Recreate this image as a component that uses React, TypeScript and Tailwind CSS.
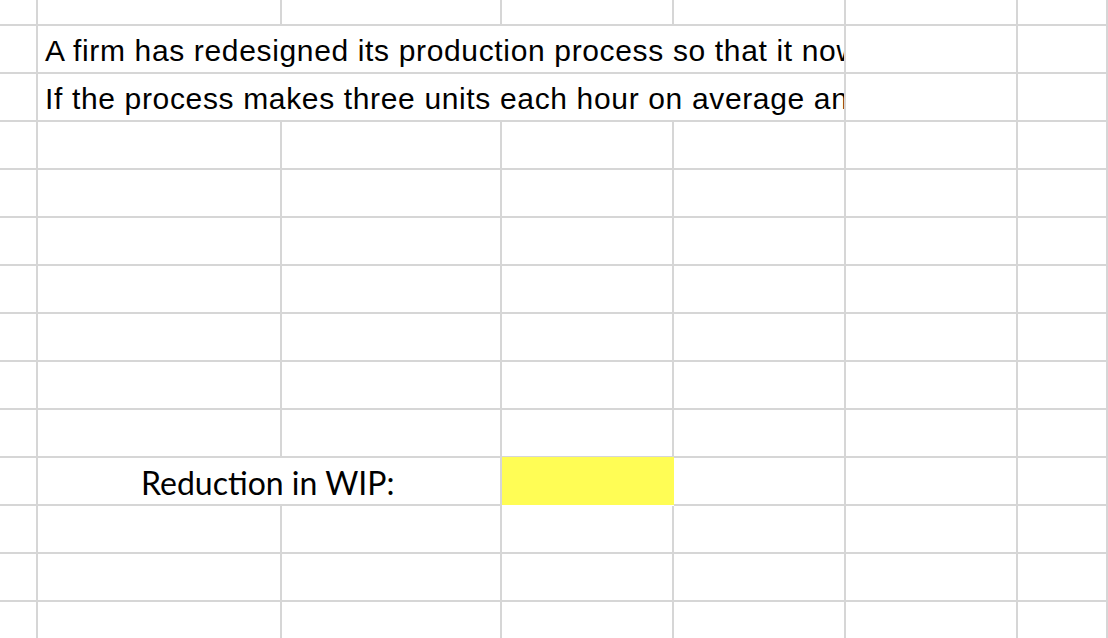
const cols = ["A", "B", "C", "D", "E", "F", "G"];

function Cell({ className = "", children }: { className?: string; children?: React.ReactNode }) {
  return (
    <div className={`border-r-2 border-b-2 border-[#d6d6d6] whitespace-nowrap ${className}`}>
      {children}
    </div>
  );
}

export default function App() {
  const emptyRows = [4, 5, 6, 7, 8, 9, 10];
  const trailingRows = [12, 13, 14];

  return (
    <div className="w-[1108px] h-[638px] overflow-hidden bg-white">
      <div className="grid grid-cols-[38px_244px_220px_172px_172px_172px_1fr] grid-rows-[26px_repeat(13,48px)]">
        {/* row 1 */}
        {cols.map((c) => (
          <Cell key={`r1-${c}`} />
        ))}

        {/* problem text rows, B:E merged */}
        <Cell />
        <Cell className="col-span-4 overflow-hidden flex items-center pl-[7px] pt-[2px] font-['Liberation_Sans',Arial,sans-serif] text-[30px] text-black tracking-[0.65px]">
          A firm has redesigned its production process so that it now takes 10 hours for a unit to be made.
        </Cell>
        <Cell />
        <Cell />

        <Cell />
        <Cell className="col-span-4 overflow-hidden flex items-center pl-[7px] pt-[2px] font-['Liberation_Sans',Arial,sans-serif] text-[30px] text-black tracking-[0.65px]">
          If the process makes three units each hour on average and it used to take 15 hours, by how much has WIP dropped?
        </Cell>
        <Cell />
        <Cell />

        {emptyRows.map((r) =>
          cols.map((c) => <Cell key={`r${r}-${c}`} />)
        )}

        {/* answer row: label spills over into C */}
        <Cell />
        <div className="relative z-10 border-b-2 border-[#d6d6d6] whitespace-nowrap flex items-center pl-[103px] pt-[3px] font-['Lato','Open_Sans',sans-serif] text-[32px] text-black">
          Reduction in WIP:
        </div>
        <Cell />
        <div className="bg-[#fffd55] border-b-2 border-[#fffd55] relative -top-[1px]" />
        <Cell />
        <Cell />
        <Cell />

        {trailingRows.map((r) =>
          cols.map((c) => <Cell key={`r${r}-${c}`} />)
        )}
      </div>
    </div>
  );
}
